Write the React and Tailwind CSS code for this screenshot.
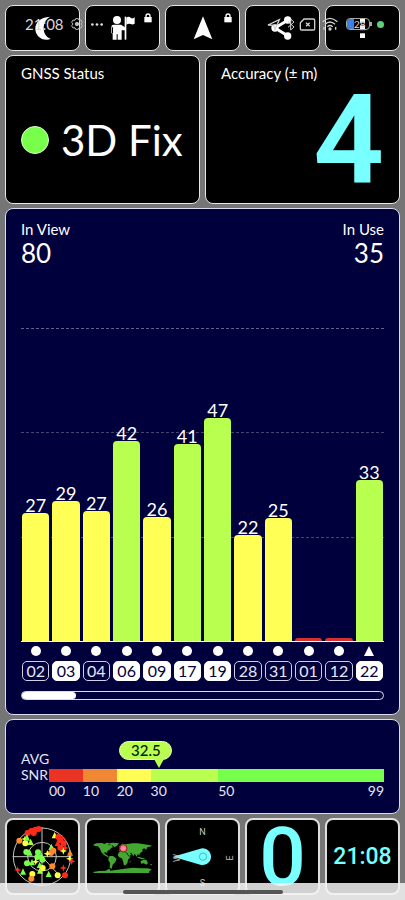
import React from "react";

const satellites = [
  { id: "02", snr: 27, height: 128, used: false },
  { id: "03", snr: 29, height: 140, used: true },
  { id: "04", snr: 27, height: 130, used: false },
  { id: "06", snr: 42, height: 200, used: true },
  { id: "09", snr: 26, height: 124, used: true },
  { id: "17", snr: 41, height: 197, used: true },
  { id: "19", snr: 47, height: 223, used: true },
  { id: "28", snr: 22, height: 106, used: false },
  { id: "31", snr: 25, height: 123, used: false },
  { id: "01", snr: 0, height: 3, used: false },
  { id: "12", snr: 0, height: 3, used: false },
  { id: "22", snr: 33, height: 161, used: true, triangle: true },
];

// full height of the plot, from the base line to the top grid line
const PLOT_HEIGHT = 313;

const barColor = (snr) => {
  if (snr >= 30) return "bg-[#b9ff4f]";
  if (snr >= 20) return "bg-[#ffff55]";
  return "bg-[#d62f2f]";
};

const segments = [
  { label: "00", size: 10, color: "bg-[#ea3323]" },
  { label: "10", size: 10, color: "bg-[#f08733]" },
  { label: "20", size: 10, color: "bg-[#fffd54]" },
  { label: "30", size: 20, color: "bg-[#baff50]" },
  { label: "50", size: 49, color: "bg-[#78ff4b]" },
];

const topTile =
  "relative flex items-center justify-center rounded-lg border border-[#e6e6e6] bg-black text-white";
const bottomTile =
  "relative flex items-center justify-center rounded-lg border-2 border-[#dedede] bg-black text-white";

const Lock = () => (
  <svg viewBox="0 0 24 28" className="absolute top-[7px] right-[7px] h-2.5 w-2" fill="#fff">
    <path d="M1 11h22v16H1z" />
    <path d="M6 12V8a6 6 0 0 1 12 0v4" fill="none" stroke="#fff" strokeWidth="4" />
  </svg>
);

const TopRow = () => (
  <div className="grid h-[46px] grid-cols-5 gap-[5px]">
    <button className={topTile} aria-label="Night mode">
      <svg viewBox="0 0 48 72" className="h-6 w-4" fill="#fff">
        <path d="M46 2C14 4 1 20 1 38s14 33 34 33c5 0 9-1 12-3C33 64 26 52 26 36S34 8 46 2Z" />
      </svg>
    </button>
    <button className={topTile} aria-label="Guide">
      <svg viewBox="0 0 72 72" className="size-6" fill="#fff">
        <circle cx="18" cy="12" r="12" />
        <path d="M8 26h22l12 8v9H32v28H20V55h-3v16H5V52H1V33q0-7 7-7Z" />
        <path d="M41 2h5v69h-5z" />
        <path d="M46 5q7-5 13 0t12-1v19q-6 4-12 1t-13 2Z" />
        <path d="M3 34h3v17H3z" fill="#000" />
      </svg>
      <Lock />
    </button>
    <button className={topTile} aria-label="Navigate">
      <svg viewBox="0 0 60 72" className="h-6 w-5" fill="#fff">
        <path d="M30 1 58 70 30 57 2 70Z" />
      </svg>
      <Lock />
    </button>
    <button className={topTile} aria-label="Share">
      <svg viewBox="0 0 72 72" className="size-6" fill="#fff">
        <path d="M50 13 12 36l38 23" fill="none" stroke="#fff" strokeWidth="9" />
        <circle cx="50" cy="12" r="11" />
        <circle cx="12" cy="36" r="11" />
        <circle cx="50" cy="60" r="11" />
      </svg>
    </button>
    <button className={topTile} aria-label="More">
      <svg viewBox="0 0 16 64" className="h-[22px] w-[5px]" fill="#fff">
        <rect y="0" width="16" height="15" />
        <rect y="24" width="16" height="15" />
        <rect y="49" width="16" height="15" />
      </svg>
    </button>
  </div>
);

const StatusCards = () => (
  <div className="grid h-[149px] grid-cols-2 gap-[5px]">
    <section className="flex flex-col rounded-lg border border-[#e6e6e6] bg-black px-[15px] pt-[7px] text-white">
      <h2 className="text-[15px] leading-5">GNSS Status</h2>
      <div className="flex flex-1 items-center gap-3 pb-1.5">
        <span className="size-7 shrink-0 rounded-full border border-[#d8ffd0] bg-[#78ff4b]" />
        <span className="text-[42px] leading-[48px] whitespace-nowrap">3D Fix</span>
      </div>
    </section>
    <section className="flex flex-col rounded-lg border border-[#e6e6e6] bg-black px-[15px] pt-[7px] text-white">
      <h2 className="text-[15px] leading-5">Accuracy (± m)</h2>
      <div className="flex flex-1 items-center justify-end pb-1">
        <span className="font-['Roboto',sans-serif] text-[124px] leading-[108px] font-semibold text-[#78ffff]">
          4
        </span>
      </div>
    </section>
  </div>
);

const SatelliteChart = () => (
  <section className="flex h-[507px] flex-col rounded-lg border border-[#dcdcf0] bg-[#00003c] px-[15px] pt-2.5 pb-3.5 text-white">
    <div className="flex justify-between">
      <div>
        <h2 className="text-[15px] leading-5">In View</h2>
        <p className="text-[26px] leading-7">80</p>
      </div>
      <div className="text-right">
        <h2 className="text-[15px] leading-5">In Use</h2>
        <p className="text-[26px] leading-7">35</p>
      </div>
    </div>
    <div className="relative mt-auto h-[314px] border-b border-white">
      <div className="absolute inset-0 flex flex-col" aria-hidden="true">
        <div className="flex-1 border-t border-dashed border-[#62628c]" />
        <div className="flex-1 border-t border-dashed border-[#45456f]" />
        <div className="flex-1 border-t border-dashed border-[#45456f]" />
      </div>
      <div className="relative flex h-full gap-[3px] px-px">
        {satellites.map((sat) => (
          <div key={sat.id} className="flex h-full flex-1 flex-col items-center justify-end">
            {sat.snr > 0 && <span className="text-lg leading-4">{sat.snr}</span>}
            <div
              className={`w-full shrink-0 rounded-t-[4px] ${barColor(sat.snr)}`}
              style={{ height: `${(sat.height / PLOT_HEIGHT) * 100}%` }}
            />
          </div>
        ))}
      </div>
    </div>
    <div className="mt-[3px] flex gap-[3px] px-px">
      {satellites.map((sat) => (
        <div key={sat.id} className="flex flex-1 flex-col items-center gap-1">
          <svg viewBox="0 0 10 10" className="my-px size-2.5" fill="#fff">
            {sat.triangle ? <path d="M5 0 10 10H0Z" /> : <circle cx="5" cy="5" r="5" />}
          </svg>
          <span
            className={`flex h-5 w-full items-center justify-center rounded-[5px] border text-base leading-none ${
              sat.used
                ? "border-white bg-white text-[#00003c]"
                : "border-[#cfcfe6] text-[#e6e6f5]"
            }`}
          >
            {sat.id}
          </span>
        </div>
      ))}
    </div>
    <div className="mt-2.5 h-[9px] rounded-full border border-[#dcdcee]">
      <div className="h-full w-[15%] rounded-full bg-white" />
    </div>
  </section>
);

const AverageSnr = () => (
  <section className="flex h-[95px] items-start rounded-lg border border-[#dcdcf0] bg-[#00003c] px-[15px] pt-[31px] text-sm text-[#e6e6f5]">
    <h2 className="w-7 shrink-0 leading-4">
      AVG
      <br />
      SNR
    </h2>
    <div className="relative flex-1 pt-[18px]">
      <div className="absolute -top-2.5 left-[21%] h-[19px] w-[53px] rounded-full border border-[#e4ffc4] bg-[#baff50] text-center text-[15px] leading-[17px] font-medium text-[#00200a]">
        32.5
        <svg viewBox="0 0 10 9" className="absolute top-[17px] left-[34px] h-[9px] w-2.5">
          <path d="M0 0h10L5 9Z" fill="#baff50" />
        </svg>
      </div>
      <div className="flex">
        {segments.map((seg) => (
          <div key={seg.label} style={{ flex: `${seg.size} 1 0` }}>
            <div className={`h-[13px] ${seg.color}`} />
            <div className="flex justify-between leading-[18px]">
              <span>{seg.label}</span>
              {seg.label === "50" && <span>99</span>}
            </div>
          </div>
        ))}
      </div>
    </div>
  </section>
);

// points of the sky plot, in tile units: [x, y, colour, shape]
const sky = [
  [68, 44, "#ff2a1a", "c"], [79, 38, "#ff2a1a", "c"], [91, 34, "#ff2a1a", "c"], [101, 32, "#ff2a1a", "c"],
  [86, 44, "#ff2a1a", "c"], [43, 67, "#ff8a2a", "c"], [60, 62, "#ffff40", "p"], [61, 75, "#ffff40", "c"],
  [77, 71, "#aaff40", "t"], [66, 58, "#78ff4b", "t"], [149, 51, "#ffff40", "t"], [160, 56, "#ff2a1a", "c"],
  [166, 66, "#ff2a1a", "c"], [172, 60, "#ff2a1a", "p"], [158, 74, "#ff2a1a", "t"], [176, 75, "#ff2a1a", "c"],
  [180, 89, "#ff2a1a", "p"], [166, 88, "#ff2a1a", "c"], [175, 98, "#ffff40", "p"], [139, 86, "#78ff4b", "t"],
  [145, 97, "#ff8a2a", "c"], [138, 104, "#ff8a2a", "c"], [127, 106, "#ffff40", "p"], [195, 103, "#ff8a2a", "t"],
  [194, 121, "#ffff40", "p"], [200, 129, "#ff2a1a", "p"], [64, 101, "#78ff4b", "c"], [74, 103, "#78ff4b", "t"],
  [99, 102, "#78ff4b", "c"], [97, 116, "#78ff4b", "c"], [109, 112, "#78ff4b", "t"], [112, 124, "#78ff4b", "c"],
  [66, 135, "#78ff4b", "c"], [81, 132, "#78ff4b", "t"], [92, 130, "#ffff40", "p"], [104, 140, "#78ff4b", "t"],
  [113, 149, "#ffff40", "c"], [105, 157, "#aaff40", "t"], [38, 155, "#ff2a1a", "p"], [54, 160, "#78ff4b", "t"],
  [82, 167, "#ffff40", "c"], [79, 181, "#ff8a2a", "c"], [131, 167, "#78ff4b", "t"], [142, 144, "#ff8a2a", "c"],
  [175, 149, "#ff2a1a", "p"], [180, 171, "#ff2a1a", "c"], [158, 171, "#ffff40", "c"],
];

const SkyPlot = () => (
  <svg viewBox="6 6 213 217" className="size-full">
    <g fill="none" stroke="#c4c4c4" strokeWidth="3">
      <circle cx="111" cy="115" r="86" />
      <circle cx="111" cy="115" r="43" />
      <path d="M111 27v176M23 115h176M111 115l48 52" />
    </g>
    {sky.map(([x, y, color, shape]) => (
      <g key={`${x}-${y}`} transform={`translate(${x} ${y})`} fill={color}>
        {shape === "c" && <circle r="9" />}
        {shape === "t" && <path d="M0-10 9 9H-9Z" />}
        {shape === "p" && <path d="M0-11 3-3 11 0 3 3 0 11-3 3-11 0-3-3Z" />}
      </g>
    ))}
  </svg>
);

const WorldMap = () => (
  <svg viewBox="6 6 213 217" className="size-full" fill="#43a832">
    <path d="M24 79 34 75 50 74 60 77 64 73 72 75 70 81 79 80 84 87 78 89 74 94 68 97 66 104 61 101 57 104 63 109 71 114 68 116 57 110 49 101 45 91 39 84 30 83Z" />
    <path d="M67 76 84 73 102 75 96 82 88 87 84 82Z" />
    <path d="M74 113 84 113 95 121 91 131 83 139 80 151 74 148 75 134 70 125 71 117Z" />
    <path d="M102 85 112 76 123 78 142 75 158 75 173 77 198 81 200 84 188 86 183 94 178 90 172 93 173 99 165 105 163 111 158 107 155 115 149 106 145 114 140 105 134 103 139 109 132 113 126 103 118 102 115 97 105 100 102 96 108 92 106 88Z" />
    <path d="M102 102 112 99 124 104 131 114 137 115 129 124 128 132 122 141 117 141 114 129 111 120 102 117 98 110Z" />
    <path d="M167 129 175 124 184 125 189 134 184 139 176 135 168 136Z" />
    <path d="M155 115 165 117 176 120 184 123 170 122 159 119ZM134 129 137 127 135 136ZM198 136 202 141 195 140Z" />
    <path d="M24 161 42 158 62 157 73 151 76 157 98 154 119 151 145 148 166 150 187 150 200 153 192 160 193 164H27Z" />
    <circle cx="115" cy="90" r="11" fill="#ff7a8a" stroke="#8c1c1c" strokeWidth="3" />
    <circle cx="115" cy="90" r="4" fill="#ff9ca8" />
  </svg>
);

const Compass = () => (
  <>
    <svg viewBox="6 6 213 217" className="size-full">
      <path d="M24 115 106 91A25 25 0 1 1 106 139Z" fill="#78ffff" />
      <circle cx="114" cy="115" r="11" fill="#78ffff" stroke="#359c9c" strokeWidth="2" />
    </svg>
    <div className="absolute inset-x-1.5 top-1.5 bottom-1 grid grid-cols-3 grid-rows-3 text-[9px] leading-3 text-[#c8c8c8]">
      <span className="col-start-2 row-start-1 text-center">N</span>
      <span className="col-start-1 row-start-2 -rotate-90 self-center justify-self-start">W</span>
      <span className="col-start-3 row-start-2 -rotate-90 self-center justify-self-end">E</span>
      <span className="col-start-2 row-start-3 self-end text-center">S</span>
    </div>
  </>
);

const BottomRow = () => (
  <div className="grid h-[77px] grid-cols-5 gap-[5px] font-['Roboto',sans-serif]">
    <button className={bottomTile} aria-label="Sky plot">
      <SkyPlot />
    </button>
    <button className={bottomTile} aria-label="World map">
      <WorldMap />
    </button>
    <button className={bottomTile} aria-label="Compass">
      <Compass />
    </button>
    <button className={bottomTile}>
      <span className="text-[82px] leading-[72px] font-medium text-[#78ffff]">0</span>
    </button>
    <button className={bottomTile}>
      <span className="text-[23px] leading-none font-medium text-[#78ffff]">21:08</span>
    </button>
  </div>
);

const SystemBar = () => (
  <div className="pointer-events-none absolute inset-x-0 top-0 flex h-12 items-center pr-[21px] pl-[25px] text-[#d8d8d8]">
    <span className="w-[46px] text-[15px]">21:08</span>
    <svg viewBox="0 0 36 36" className="size-3" fill="none" stroke="#bdbdbd" strokeWidth="3">
      <path d="m14 2h8l2 5 6-1 4 7-4 5 4 5-4 7-6-1-2 5h-8l-2-5-6 1-4-7 4-5-4-5 4-7 6 1Z" />
      <circle cx="18" cy="18" r="5" fill="#bdbdbd" />
    </svg>
    <svg viewBox="0 0 36 8" className="ml-2 h-[3px] w-3" fill="#e0e0e0">
      <circle cx="4" cy="4" r="4" />
      <circle cx="18" cy="4" r="4" />
      <circle cx="32" cy="4" r="4" />
    </svg>
    <svg viewBox="0 0 150 45" className="ml-auto h-[15px] w-[50px] shrink-0" fill="none" stroke="#d0d0d0" strokeWidth="4">
      {/* location and bluetooth */}
      <path d="M6 24 40 8 27 38 23 25Z" />
      <path d="m66 14 18 16-10 9V6l10 9-18 16" strokeWidth="3" />
      {/* no sim */}
      <path d="M114 6h28q4 0 4 4v25q0 4-4 4h-35q-4 0-4-4V17Z" />
      <path d="m120 17 11 11m0-11-11 11" />
    </svg>
    <svg viewBox="0 0 48 42" className="ml-1.5 h-3.5 w-4" fill="none" stroke="#d0d0d0" strokeWidth="4">
      <path d="M2 14q22-20 44 0M9 22q15-14 30 0M16 29q8-7 16 0" />
      <circle cx="24" cy="36" r="3" fill="#d0d0d0" />
      <path d="M41 30v8M6 30v8" />
    </svg>
    <div className="ml-2 flex h-3 w-6 items-center rounded-[4px] border border-[#a8a8a8] text-[10px] leading-none">
      <span className="h-full w-[7px] shrink-0 rounded-l-[3px] bg-[#3f7fe0]" />
      <span>28</span>
    </div>
    <span className="h-1 w-0.5 bg-[#a8a8a8]" />
    <span className="ml-[5px] size-[7px] rounded-full bg-[#5fd07a]" />
  </div>
);

const App = () => {
  return (
    <main className="relative flex min-h-screen flex-col gap-1 bg-[#757575] p-[5px] font-['Lato','Liberation_Sans',sans-serif]">
      <TopRow />
      <StatusCards />
      <SatelliteChart />
      <AverageSnr />
      <BottomRow />
      <SystemBar />
      <div className="pointer-events-none absolute inset-x-0 bottom-0 flex h-[17px] justify-center bg-[#f4f4f4]/85 pt-[7px]">
        <div className="h-1 w-[160px] rounded-full bg-[#555555]" />
      </div>
    </main>
  );
};

export default App;
